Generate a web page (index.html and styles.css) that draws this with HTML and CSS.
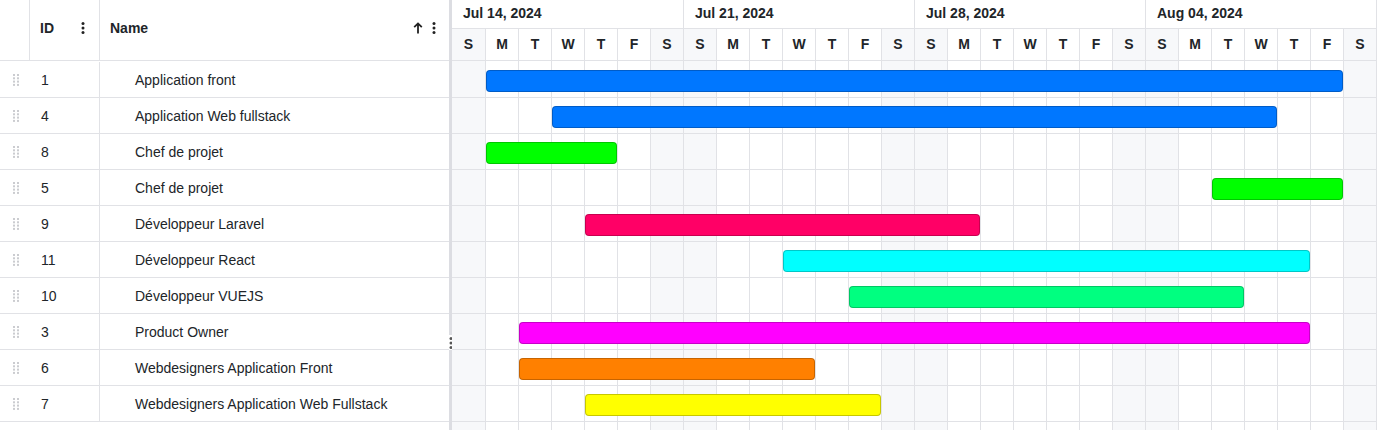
FILE: index.html
```html
<!DOCTYPE html>
<html>
<head>
<meta charset="utf-8">
<link rel="stylesheet" href="styles.css">
</head>
<body>
<div class="gantt">
  <div class="grid">
    <div class="grid-head">
      <div class="hc hc-drag"></div>
      <div class="hc hc-id"><span>ID</span>
        <svg class="kebab" width="4" height="12" viewBox="0 0 4 12"><circle cx="2" cy="1.6" r="1.5"/><circle cx="2" cy="6" r="1.5"/><circle cx="2" cy="10.4" r="1.5"/></svg>
      </div>
      <div class="hc hc-name"><span>Name</span>
        <span class="tools">
          <svg class="arrow" width="10" height="12" viewBox="0 0 10 12"><path d="M5 11.5V1.5M1.2 5.2L5 1.4L8.8 5.2" fill="none" stroke="#222" stroke-width="1.8"/></svg>
          <svg class="kebab" width="4" height="12" viewBox="0 0 4 12"><circle cx="2" cy="1.6" r="1.5"/><circle cx="2" cy="6" r="1.5"/><circle cx="2" cy="10.4" r="1.5"/></svg>
        </span>
      </div>
    </div>
    <div class="rows" id="rows"></div>
  </div>
  <div class="splitter">
    <div class="seg seg-top"></div>
    <div class="handle">
      <svg width="4" height="12" viewBox="0 0 4 12"><circle cx="2" cy="1.6" r="1.5"/><circle cx="2" cy="6" r="1.5"/><circle cx="2" cy="10.4" r="1.5"/></svg>
    </div>
    <div class="seg seg-rest"></div>
  </div>
  <div class="timeline">
    <div class="dates">
      <div class="date">Jul 14, 2024</div>
      <div class="date">Jul 21, 2024</div>
      <div class="date">Jul 28, 2024</div>
      <div class="date">Aug 04, 2024</div>
    </div>
    <div class="days" id="days"></div>
    <div class="chart" id="chart"></div>
  </div>
</div>
<script>
var tasks = [
  ["1","Application front",2,28,"#0077ff"],
  ["4","Application Web fullstack",4,26,"#0077ff"],
  ["8","Chef de projet",2,6,"#00ff00"],
  ["5","Chef de projet",24,28,"#00ff00"],
  ["9","Développeur Laravel",5,17,"#ff0066"],
  ["11","Développeur React",11,27,"#00ffff"],
  ["10","Développeur VUEJS",13,25,"#00ff80"],
  ["3","Product Owner",3,27,"#ff00ff"],
  ["6","Webdesigners Application Front",3,12,"#ff8000"],
  ["7","Webdesigners Application Web Fullstack",5,14,"#ffff00"]
];
var drag = '<svg width="6" height="12" viewBox="0 0 6 12"><g fill="#cbccd0"><rect x="0" y="0" width="2" height="2"/><rect x="4" y="0" width="2" height="2"/><rect x="0" y="3.3" width="2" height="2"/><rect x="4" y="3.3" width="2" height="2"/><rect x="0" y="6.6" width="2" height="2"/><rect x="4" y="6.6" width="2" height="2"/><rect x="0" y="9.9" width="2" height="2"/><rect x="4" y="9.9" width="2" height="2"/></g></svg>';
var rows = document.getElementById('rows');
var html = '';
tasks.forEach(function(t){
  html += '<div class="row"><div class="c c-drag">'+drag+'</div><div class="c c-id">'+t[0]+'</div><div class="c c-name">'+t[1]+'</div></div>';
});
rows.innerHTML = html;
var letters = "SMTWTFS";
var days = document.getElementById('days');
var chart = document.getElementById('chart');
var dh = '', ch = '';
for (var i = 0; i < 28; i++) {
  var wd = i % 7;
  var we = (wd === 0 || wd === 6) ? ' we' : '';
  dh += '<div class="day'+we+'">'+letters[wd]+'</div>';
  ch += '<div class="col'+we+'" style="grid-column:'+(i+1)+'"></div>';
}
for (var r = 0; r < 10; r++) {
  ch += '<div class="rline" style="grid-row:'+(r+1)+'"></div>';
}
tasks.forEach(function(t, r){
  ch += '<div class="bar" style="grid-row:'+(r+1)+';grid-column:'+t[2]+' / '+t[3]+';background:'+t[4]+'"></div>';
});
days.innerHTML = dh;
chart.innerHTML = ch;
</script>
</body>
</html>
```

FILE: styles.css
```css
* { box-sizing: border-box; }
html, body { margin: 0; padding: 0; background: #fff; }
body {
  font-family: "Liberation Sans", Arial, sans-serif;
  font-size: 14px;
  color: #212529;
}
.gantt {
  display: flex;
  height: 430px;
  overflow: hidden;
}
.grid {
  width: 449px;
  flex: none;
}
.grid-head {
  display: flex;
  height: 61px;
  border-bottom: 1px solid #e1e2e6;
}
.hc {
  display: flex;
  align-items: center;
  font-weight: bold;
  padding-bottom: 4px;
}
.hc-drag { width: 30px; border-right: 1px solid #e1e2e6; }
.hc-id {
  width: 70px;
  border-right: 1px solid #e1e2e6;
  padding-left: 10px;
  padding-right: 14px;
  justify-content: space-between;
}
.hc-name {
  flex: 1;
  padding-left: 10px;
  padding-right: 13px;
  justify-content: space-between;
}
.tools { display: flex; align-items: center; gap: 9px; }
.kebab { fill: #222; display: block; }
.arrow { display: block; }
.row {
  display: flex;
  height: 36px;
  border-bottom: 1px solid #e1e2e6;
}
.row:first-child {
  height: 37px;
  padding-top: 1px;
}
.c { display: flex; align-items: center; }
.c-drag { width: 30px; padding-left: 13px; }
.c-drag svg { display: block; }
.c-id { width: 70px; padding-left: 11px; border-right: 1px solid #e1e2e6; }
.c-name { flex: 1; padding-left: 35px; }
.splitter {
  width: 3px;
  flex: none;
  display: flex;
  flex-direction: column;
}
.seg { background: #dcdde2; }
.seg-top { height: 335px; }
.seg-rest { flex: 1; }
.handle {
  height: 15px;
  display: flex;
  align-items: center;
  justify-content: center;
  background: #fff;
}
.handle svg { fill: #555; display: block; flex: none; }
.timeline {
  width: 925px;
  flex: none;
  display: flex;
  flex-direction: column;
}
.dates {
  display: grid;
  grid-template-columns: 232px 231px 231px 231px;
  height: 29px;
  border-bottom: 1px solid #e1e2e6;
}
.date {
  border-right: 1px solid #e1e2e6;
  padding-left: 11px;
  padding-bottom: 2px;
  display: flex;
  align-items: center;
  font-weight: bold;
}
.days {
  display: grid;
  grid-template-columns: 34px repeat(27, 33px);
  height: 32px;
  border-bottom: 1px solid #e1e2e6;
}
.day {
  border-right: 1px solid #e1e2e6;
  display: flex;
  align-items: center;
  justify-content: center;
  font-weight: bold;
  padding-bottom: 1px;
}
.we { background: #f7f8fa; }
.chart {
  flex: 1;
  display: grid;
  grid-template-columns: 34px repeat(27, 33px);
  grid-template-rows: 37px repeat(9, 36px) 1fr;
}
.col {
  grid-row: 1 / -1;
  border-right: 1px solid #e1e2e6;
}
.rline {
  grid-column: 1 / -1;
  border-bottom: 1px solid #e1e2e6;
}
.bar {
  align-self: end;
  margin-bottom: 6px;
  margin-right: 1px;
  height: 22px;
  border-radius: 4px;
  border: 1px solid rgba(0, 0, 0, 0.22);
}
```
